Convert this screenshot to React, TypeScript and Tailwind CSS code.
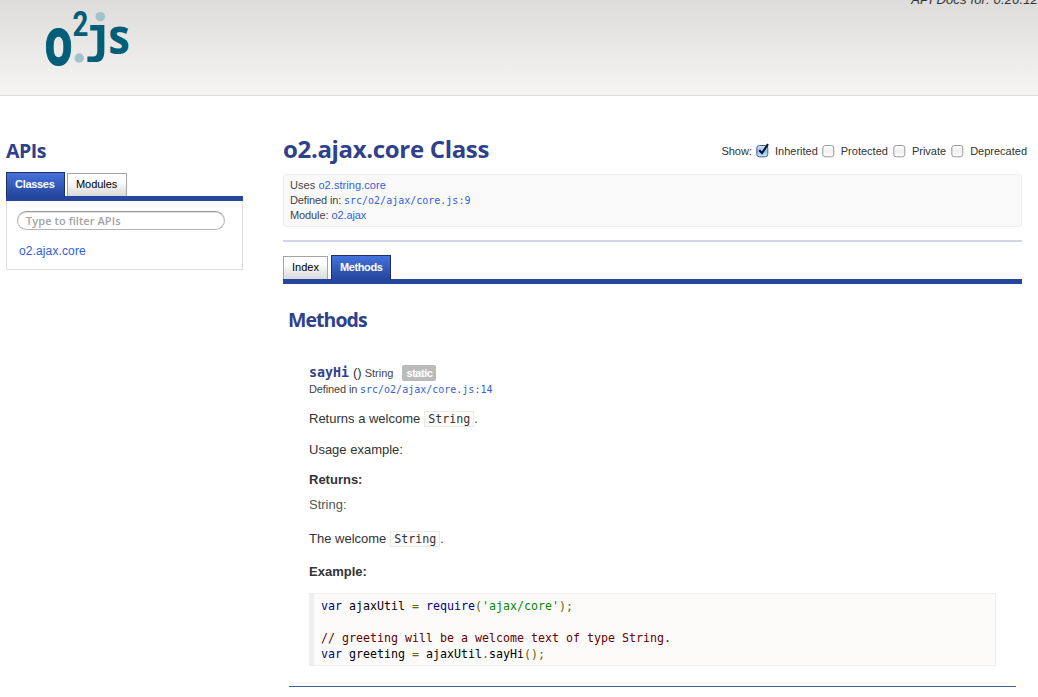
import React from "react";

const activeTab =
  "h-[25px] border border-b-0 border-[#1f2f5f] bg-linear-to-b from-[#4472dd] to-[#24469c] px-2 text-[11px] leading-[23px] font-bold text-white";
const idleTab =
  "mt-px h-[23px] border border-b-0 border-[#a4a4a4] bg-linear-to-b from-white from-30% to-[#d9d9d9] px-2 text-[11px] leading-[21px] text-black";

function Logo() {
  return (
    <svg className="h-[96px] w-[160px]" viewBox="0 0 160 96" fill="#005e78" fontFamily="Roboto, sans-serif" fontWeight="700">
      <circle cx="100.3" cy="16.7" r="4.8" fill="#a3c3ca" />
      <circle cx="79.2" cy="58" r="4.7" fill="#a3c3ca" />
      <text transform="translate(44.8 65.2) scale(1.06 1.5)" fontSize="46" stroke="#005e78" strokeWidth="0.8">o</text>
      <text transform="translate(72.6 36) scale(0.8 1)" fontSize="34.5">2</text>
      <text x="84" y="52" fontSize="49" fontFamily="DejaVu Sans Mono, monospace">ȷ</text>
      <text transform="translate(108.2 53.8) scale(0.87 1)" fontSize="50" fontFamily="Open Sans, sans-serif">s</text>
    </svg>
  );
}

function Box({ checked = false }: { checked?: boolean }) {
  return (
    <svg width="14" height="15" viewBox="0 0 14 15" className="mt-[-2px] overflow-visible">
      <defs>
        <linearGradient id="off" x1="0" y1="0" x2="0" y2="1">
          <stop offset="0" stopColor="#fff" />
          <stop offset="0.5" stopColor="#f0f0f0" />
          <stop offset="1" stopColor="#fcfcfc" />
        </linearGradient>
        <linearGradient id="on" x1="0" y1="0" x2="0" y2="1">
          <stop offset="0" stopColor="#d7e8fa" />
          <stop offset="0.5" stopColor="#8fc0f2" />
          <stop offset="1" stopColor="#c8f0ff" />
        </linearGradient>
      </defs>
      <rect x="0.8" y="2.5" width="11" height="11.3" rx="2.5" fill={checked ? "url(#on)" : "url(#off)"} stroke={checked ? "#49608f" : "#999"} />
      {checked && <path d="M3.2 7.2 L6 10 L12 1.2" fill="none" stroke="#0a1530" strokeWidth="2.1" />}
    </svg>
  );
}

function Code({ children }: { children: React.ReactNode }) {
  return (
    <code className="ml-[4px] inline-block h-[16px] border border-[#ebe9e6] bg-[#fcfbfa] px-[3px] align-top font-['DejaVu_Sans_Mono',monospace] text-[11.63px] leading-[14px]">
      {children}
    </code>
  );
}

const link = "text-[#3060dd]";
const mono = "font-['DejaVu_Sans_Mono',monospace]";
const heading = "font-['Open_Sans',sans-serif] font-bold text-[#30418c]";

export default function App() {
  return (
    <div className="h-[697px] w-[1038px] overflow-hidden bg-white font-['Liberation_Sans',Arial,sans-serif] text-[13px] text-[#333]">
      <header className="flex h-[96px] items-start justify-between border-b border-[#dcdcdc] bg-linear-to-b from-[#dddcda] to-[#f6f5f3]">
        <Logo />
        <p className="mt-[-8px] text-[13px] leading-[16px] tracking-[0.15px] whitespace-nowrap italic">API Docs for: 0.26.12</p>
      </header>

      <div className="flex">
        <aside className="ml-[6px] w-[237px] pt-[40px]">
          <h2 className={`${heading} h-[36px] text-[19.5px] leading-[30px] tracking-[-0.5px]`}>APIs</h2>
          <div className="flex h-[24px] gap-[2px]">
            <div className={`${activeTab} w-[59px] tracking-[-0.3px]`}>Classes</div>
            <div className={`${idleTab} w-[60px] tracking-[-0.05px]`}>Modules</div>
          </div>
          <div className="h-[5px] bg-[#24469c]" />
          <div className="h-[69px] border border-t-0 border-[#ddd] px-[10px] pt-[10px]">
            <div className="h-[19px] w-[208px] rounded-full border border-[#b5b5b5] border-t-[#999] pl-2 font-['Open_Sans',sans-serif] text-[11px] leading-[18px] font-semibold tracking-[0.07px] text-[#a4a4a4] shadow-[inset_0_1px_1px_#ddd]">
              Type to filter APIs
            </div>
            <a className={`${link} mt-[13px] ml-[2px] block text-[12px] leading-[16px] tracking-[0.12px]`}>o2.ajax.core</a>
          </div>
        </aside>

        <main className="ml-[40px] w-[739px] pt-[36px]">
          <div className="mr-[-5px] flex h-[42px] items-start justify-between">
            <h1 className={`${heading} text-[24px] leading-[34px] whitespace-nowrap tracking-[-0.33px]`}>o2.ajax.core Class</h1>
            <div className="mt-[11px] flex h-[16px] items-center text-[11px] leading-[16px] whitespace-nowrap">
              <span className="mr-[4px]">Show:</span>
              <Box checked />
              <span className="mr-[4px] ml-[5px]">Inherited</span>
              <Box />
              <span className="mr-[5px] ml-[5px]">Protected</span>
              <Box />
              <span className="mr-[5px] ml-[5px]">Private</span>
              <Box />
              <span className="ml-[5px]">Deprecated</span>
            </div>
          </div>

          <div className="h-[53px] rounded-[3px] border border-[#eee] bg-[#f9f9f9] px-[6px] pt-[3px] text-[11px] leading-[15px] text-[#444]">
            <div className="tracking-[0.06px]">Uses <a className={link}>o2.string.core</a></div>
            <div className="flex"><span className="w-[54px] tracking-[-0.12px] whitespace-nowrap">Defined in:</span><a className={`${link} ${mono} text-[10px]`}>src/o2/ajax/core.js:9</a></div>
            <div className="tracking-[-0.1px]">Module: <a className={link}>o2.ajax</a></div>
          </div>

          <div className="mt-[13px] h-[2px] bg-[#d0d6ea]" />

          <div className="mt-[13px] flex h-[24px] gap-[3px]">
            <div className={`${idleTab} w-[45px]`}>Index</div>
            <div className={`${activeTab} w-[60px] tracking-[-0.4px]`}>Methods</div>
          </div>
          <div className="h-[5px] bg-[#24469c]" />

          <section className="mx-[6px] h-[403px] border-b border-[#436098] pt-[20px]">
            <h2 className={`${heading} ml-[-1px] h-[32px] text-[19.5px] leading-[32px] tracking-[-0.95px]`}>Methods</h2>
            <div className="ml-[20px]">
              <div className="mt-[29px] flex h-[16px] items-center leading-[16px]">
                <span className={`${mono} text-[13.3px] font-bold text-[#30418c]`}>sayHi</span>
                <span className="ml-[4px]">()</span>
                <span className="ml-[3px] text-[11px] text-[#444]">String</span>
                <span className="ml-[9px] h-[16px] w-[34px] rounded-[2px] bg-[#bbb] text-center text-[11px] leading-[16px] font-bold tracking-[-0.5px] text-white">static</span>
              </div>
              <div className="flex h-[16px] text-[11px] leading-[16px] text-[#444]">
                <span className="w-[51px] tracking-[-0.13px] whitespace-nowrap">Defined in</span>
                <a className={`${link} ${mono} mt-px text-[10px]`}>src/o2/ajax/core.js:14</a>
              </div>
              <p className="mt-[14px] h-[16px] leading-[16px]">Returns a welcome<Code>String</Code>.</p>
              <p className="mt-[15px] h-[16px] leading-[16px]">Usage example:</p>
              <h3 className="mt-[14px] h-[16px] leading-[16px] font-bold">Returns:</h3>
              <p className="mt-[9px] h-[16px] leading-[16px] text-[#555]">String:</p>
              <p className="mt-[18px] h-[16px] leading-[16px]">The welcome<Code>String</Code>.</p>
              <h3 className="mt-[17px] h-[16px] leading-[16px] font-bold">Example:</h3>
              <pre className={`${mono} mt-[13px] h-[73px] w-[687px] border border-l-[5px] border-[#eee] bg-[#fcfbfa] pt-[4px] pl-[7px] text-[11.63px] leading-[16px] text-black`}>
                <span className="text-[#008]">var</span>{" ajaxUtil "}<span className="text-[#660]">=</span>{" "}<span className="text-[#008]">require</span><span className="text-[#660]">(</span><span className="text-[#080]">'ajax/core'</span><span className="text-[#660]">);</span>{"\n\n"}
                <span className="text-[#600]">{"// greeting will be a welcome text of type String."}</span>{"\n"}
                <span className="text-[#008]">var</span>{" greeting "}<span className="text-[#660]">=</span>{" ajaxUtil"}<span className="text-[#660]">.</span>{"sayHi"}<span className="text-[#660]">();</span>
              </pre>
            </div>
          </section>
        </main>
      </div>
    </div>
  );
}
